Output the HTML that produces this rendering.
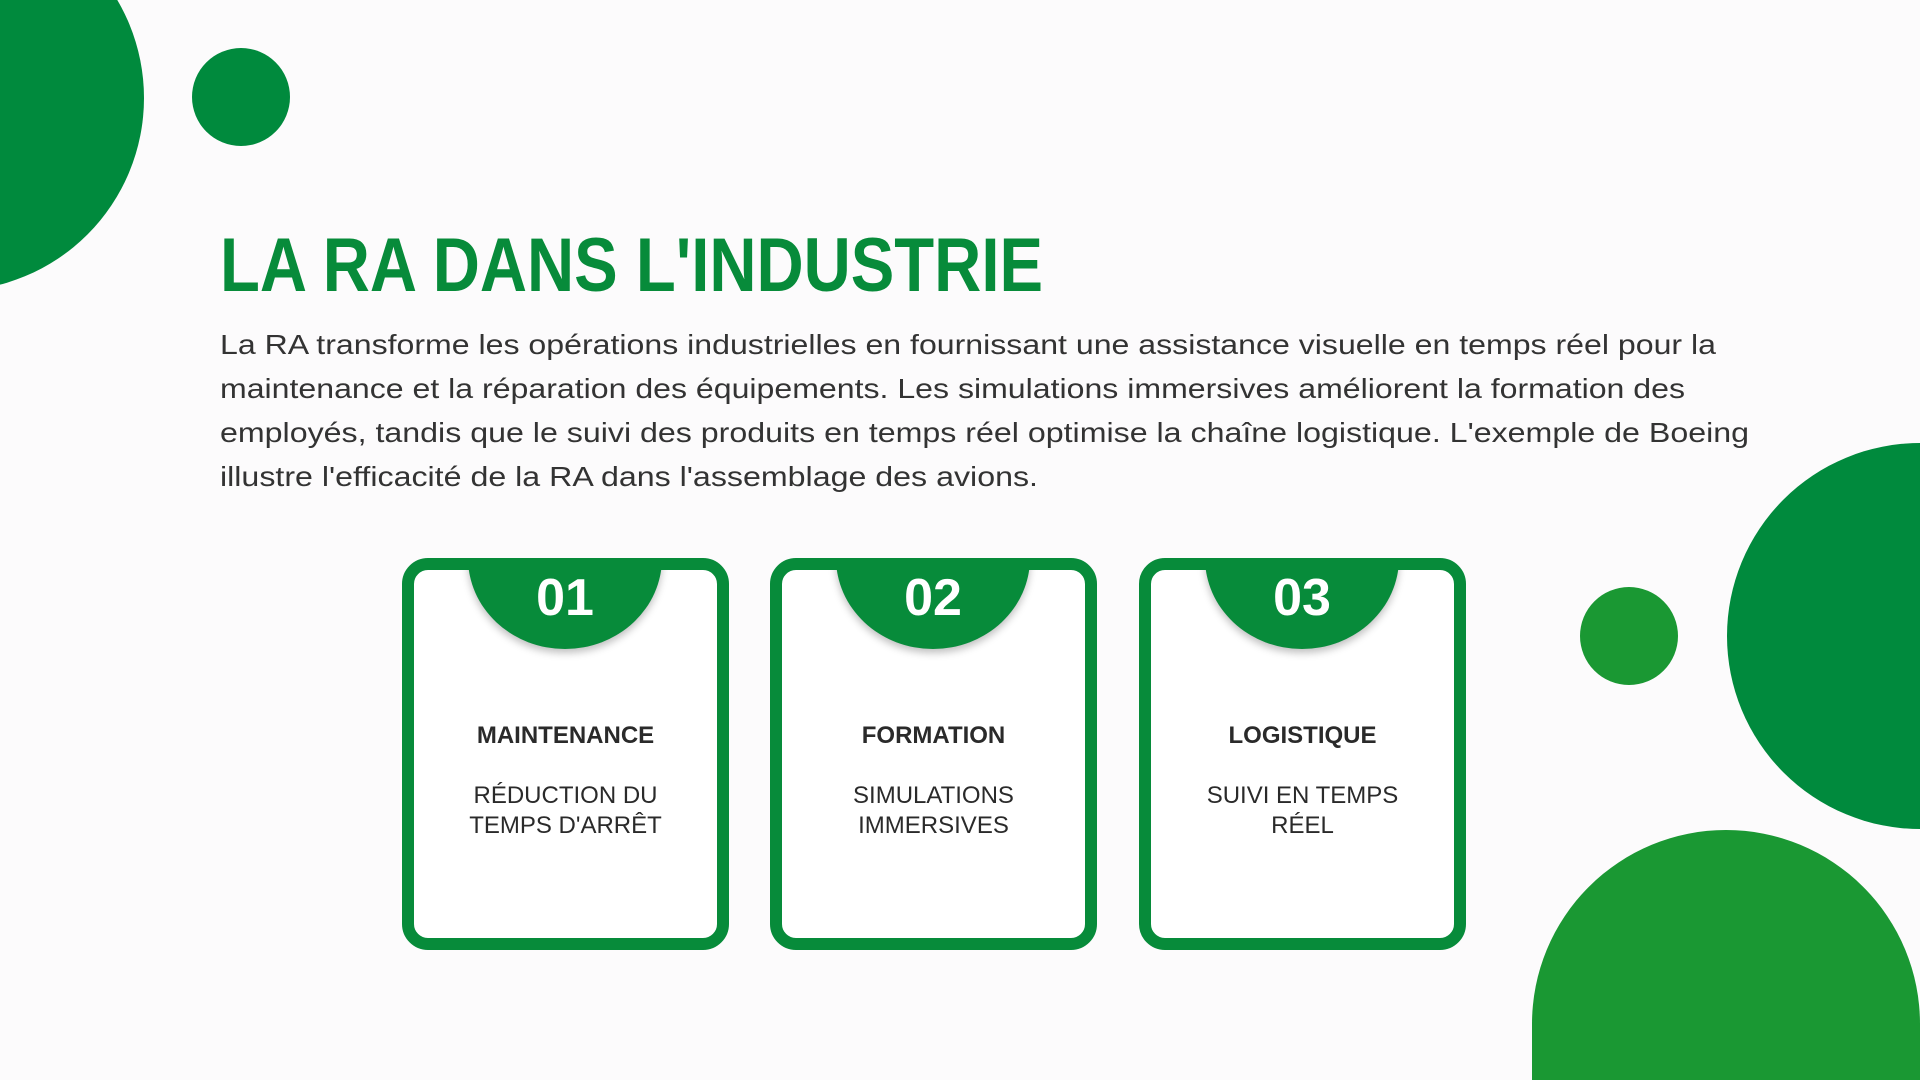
<!DOCTYPE html>
<html><head><meta charset="utf-8"><style>
html,body{margin:0;padding:0;width:1920px;height:1080px;overflow:hidden}
body{background:#fcfbfc;position:relative;font-family:"Liberation Sans",sans-serif}
.a{position:absolute}
.c{border-radius:50%}
.card{position:absolute;top:558px;width:327px;height:392px;box-sizing:border-box;border:12px solid #078b3a;border-radius:26px;background:#fff;overflow:hidden}
.tab{position:absolute;left:54px;top:-12px;width:194px;height:91px;background:#078b3a;border-radius:0 0 97px 97px/0 0 91px 91px;box-shadow:0 4px 8px rgba(0,0,0,.25);color:#fff;font-weight:bold;font-size:52px;text-align:center;line-height:80px}
.h{position:absolute;left:0;right:0;top:152px;text-align:center;font-weight:bold;font-size:24px;color:#2a2a2a}
.s{position:absolute;left:0;right:0;top:211px;text-align:center;font-size:24px;line-height:30px;color:#2a2a2a}
</style></head><body>
<div class="a c" style="left:-242px;top:-95px;width:386px;height:386px;background:#008a3d"></div>
<div class="a c" style="left:192px;top:48px;width:98px;height:98px;background:#008a3d"></div>
<div class="a c" style="left:1727px;top:443px;width:386px;height:386px;background:#008a3d"></div>
<div class="a c" style="left:1580px;top:587px;width:98px;height:98px;background:#1a9833"></div>
<div class="a" style="left:1532px;top:830px;width:388px;height:250px;border-radius:194px 194px 0 0;background:#1a9833"></div>
<svg class="a" style="left:0;top:0" width="1920" height="520">
<text x="220" y="291" font-family="Liberation Sans" font-weight="bold" font-size="76" fill="#078b3a" textLength="823" lengthAdjust="spacingAndGlyphs">LA RA DANS L'INDUSTRIE</text>
<g font-family="Liberation Sans" font-size="28" fill="#333">
<text x="220" y="354" textLength="1496" lengthAdjust="spacingAndGlyphs">La RA transforme les opérations industrielles en fournissant une assistance visuelle en temps réel pour la</text>
<text x="220" y="398" textLength="1465" lengthAdjust="spacingAndGlyphs">maintenance et la réparation des équipements. Les simulations immersives améliorent la formation des</text>
<text x="220" y="442" textLength="1529" lengthAdjust="spacingAndGlyphs">employés, tandis que le suivi des produits en temps réel optimise la chaîne logistique. L'exemple de Boeing</text>
<text x="220" y="486" textLength="818" lengthAdjust="spacingAndGlyphs">illustre l'efficacité de la RA dans l'assemblage des avions.</text>
</g></svg>
<div class="card" style="left:402px"><div class="tab">01</div><div class="h">MAINTENANCE</div><div class="s">RÉDUCTION DU<br>TEMPS D'ARRÊT</div></div>
<div class="card" style="left:770px"><div class="tab">02</div><div class="h">FORMATION</div><div class="s">SIMULATIONS<br>IMMERSIVES</div></div>
<div class="card" style="left:1139px"><div class="tab">03</div><div class="h">LOGISTIQUE</div><div class="s">SUIVI EN TEMPS<br>RÉEL</div></div>
</body></html>
